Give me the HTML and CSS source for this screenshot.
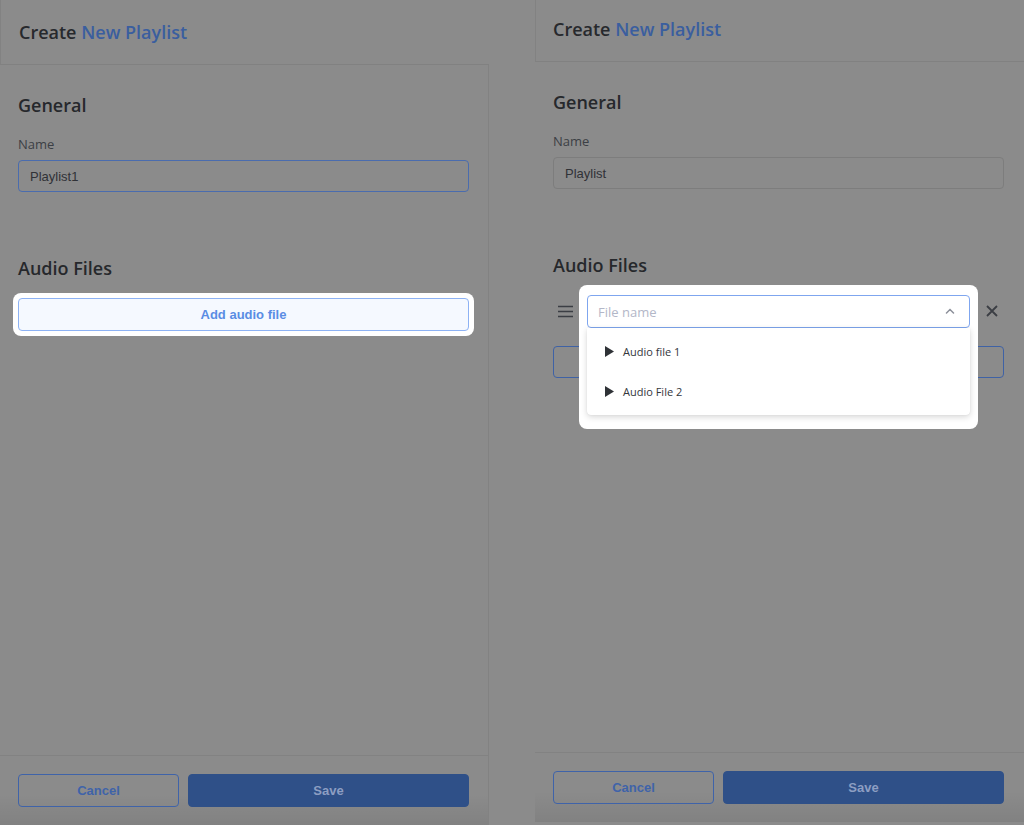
FILE: index.html
```html
<!DOCTYPE html>
<html lang="en">
<head>
<meta charset="utf-8">
<title>Create New Playlist</title>
<link rel="stylesheet" href="styles.css">
</head>
<body>
<div class="screen">
  <section class="panel panel-left">
    <header class="panel-header">
      <h1 class="title">Create <span class="title-accent">New Playlist</span></h1>
    </header>
    <div class="panel-body">
      <h2 class="section-title">General</h2>
      <label class="field-label">Name</label>
      <div class="text-input focused">Playlist1</div>
      <h2 class="section-title audio-title">Audio Files</h2>
      <div class="spotlight spotlight-btn">
        <button class="add-btn">Add audio file</button>
      </div>
    </div>
    <footer class="panel-footer">
      <button class="btn btn-cancel">Cancel</button>
      <button class="btn btn-save">Save</button>
    </footer>
  </section>

  <section class="panel panel-right">
    <header class="panel-header">
      <h1 class="title">Create <span class="title-accent">New Playlist</span></h1>
    </header>
    <div class="panel-body">
      <h2 class="section-title">General</h2>
      <label class="field-label">Name</label>
      <div class="text-input">Playlist</div>
      <h2 class="section-title audio-title">Audio Files</h2>
      <div class="audio-row">
        <span class="handle">
          <svg width="15" height="13" viewBox="0 0 15 13"><path d="M0 1.5H15M0 6.5H15M0 11.5H15" stroke="#3b3e44" stroke-width="1.6" fill="none"/></svg>
        </span>
        <div class="select-wrap">
          <div class="select-spot"></div>
          <div class="select-box">
            <span class="placeholder">File name</span>
            <svg class="chevron" width="10" height="6" viewBox="0 0 10 6"><path d="M1.5 5L5 1.5L8.5 5" stroke="#8c909a" stroke-width="1.5" fill="none" stroke-linecap="round"/></svg>
          </div>
          <ul class="menu">
            <li class="menu-item">
              <svg width="9" height="11" viewBox="0 0 9 11"><path d="M0 0L9 5.5L0 11Z" fill="#2f3237"/></svg>
              <span>Audio file 1</span>
            </li>
            <li class="menu-item">
              <svg width="9" height="11" viewBox="0 0 9 11"><path d="M0 0L9 5.5L0 11Z" fill="#2f3237"/></svg>
              <span>Audio File 2</span>
            </li>
          </ul>
        </div>
        <span class="remove">
          <svg width="12" height="12" viewBox="0 0 12 12"><path d="M1 1L11 11M11 1L1 11" stroke="#3b3e44" stroke-width="1.8" fill="none"/></svg>
        </span>
      </div>
      <button class="add-btn dim">Add audio file</button>
    </div>
    <footer class="panel-footer">
      <button class="btn btn-cancel">Cancel</button>
      <button class="btn btn-save">Save</button>
    </footer>
  </section>
</div>
</body>
</html>
```
FILE: styles.css
```css
* { box-sizing: border-box; }
html, body { margin: 0; padding: 0; }
body {
  background: #8b8b8b;
  width: 1024px;
  height: 825px;
  overflow: hidden;
  font-family: "Open Sans", "Noto Sans", sans-serif;
}
.screen {
  display: flex;
  gap: 46px;
  height: 825px;
}
.panel {
  width: 489px;
  height: 825px;
  display: flex;
  flex-direction: column;
}
.panel-right {
  margin-top: -3px;
}
.panel-header {
  height: 65px;
  border-bottom: 1px solid #818181;
  border-left: 1px solid #828282;
  padding: 20px 0 0 18px;
}
.panel-right .panel-header {
  padding-left: 17px;
}
.title {
  margin: 0;
  font-size: 18px;
  line-height: 24px;
  font-weight: 600;
  color: #27292d;
}
.title-accent { color: #3a5e9f; }
.panel-body {
  flex: 1;
  padding: 28px 19px 0 18px;
  border-right: 1px solid #828282;
}
.panel-right .panel-body {
  border-right: none;
  padding-right: 20px;
}
.section-title {
  margin: 0 0 18px;
  font-size: 18px;
  line-height: 24px;
  font-weight: 600;
  color: #26282c;
}
.audio-title { margin-top: 64px; }
.field-label {
  display: block;
  font-size: 13px;
  line-height: 18px;
  color: #3c3f45;
  margin-bottom: 7px;
}
.text-input {
  height: 32px;
  border: 1px solid #7d7d7d;
  border-radius: 4px;
  padding: 0 11px;
  display: flex;
  align-items: center;
  font-family: "Liberation Sans", Arial, sans-serif;
  font-size: 13px;
  color: #303237;
}
.text-input.focused { border-color: #4a6cae; }

.spotlight-btn {
  background: #ffffff;
  border-radius: 8px;
  padding: 5px;
  margin: -5px -5px 0;
}
.add-btn {
  display: block;
  width: 100%;
  height: 33px;
  background: #f5f9ff;
  border: 1px solid #8db2f4;
  border-radius: 4px;
  font-family: "Liberation Sans", Arial, sans-serif;
  font-weight: 700;
  font-size: 13px;
  color: #5a8de4;
  padding: 0;
}
.add-btn.dim {
  height: 32px;
  background: transparent;
  border-color: #3f62a5;
  color: #3f62a5;
  margin-top: 19px;
}

.audio-row {
  display: flex;
  align-items: center;
  gap: 10px;
  height: 32px;
  margin-top: 0;
}
.handle, .remove {
  width: 24px;
  display: flex;
  align-items: center;
  justify-content: center;
}
.handle { justify-content: flex-start; padding-left: 5px; }
.select-wrap {
  flex: 1;
  position: relative;
  height: 32px;
}
.select-spot {
  position: absolute;
  left: -8px;
  right: -8px;
  top: -10px;
  height: 144px;
  background: #ffffff;
  border-radius: 8px;
}
.select-box {
  position: relative;
  height: 33px;
  border: 1px solid #7fa6ef;
  border-radius: 4px;
  background: #ffffff;
  display: flex;
  align-items: center;
  justify-content: space-between;
  padding: 0 14px 0 10px;
}
.placeholder {
  font-size: 13px;
  color: #b3b7c8;
}
.chevron { margin-top: -2px; }
.menu {
  position: absolute;
  left: 0;
  right: 0;
  top: 33px;
  margin: 0;
  padding: 3px 0 4px;
  list-style: none;
  background: #ffffff;
  border-radius: 0 0 4px 4px;
  box-shadow: 0 2px 6px rgba(0, 0, 0, 0.16), 0 0 1px rgba(0, 0, 0, 0.12);
}
.menu-item {
  height: 40px;
  display: flex;
  align-items: center;
  gap: 9px;
  padding-left: 18px;
  font-size: 11px;
  color: #33363b;
}

.panel-footer {
  height: 70px;
  border-top: 1px solid #828282;
  border-right: 1px solid #828282;
  padding: 18px 19px 0 18px;
  display: flex;
  gap: 9px;
  background: linear-gradient(to bottom, rgba(0,0,0,0) 55%, rgba(0,0,0,0.07) 100%);
}
.panel-right .panel-footer {
  border-right: none;
  padding-right: 20px;
}
.btn {
  height: 33px;
  border-radius: 4px;
  font-family: "Liberation Sans", Arial, sans-serif;
  font-weight: 700;
  font-size: 13px;
  padding: 0;
}
.btn-cancel {
  width: 161px;
  background: transparent;
  border: 1px solid #3f63a9;
  color: #3f63a9;
}
.btn-save {
  flex: 1;
  background: #2f5088;
  border: 1px solid #2f5088;
  color: #8d9ec2;
}
```
